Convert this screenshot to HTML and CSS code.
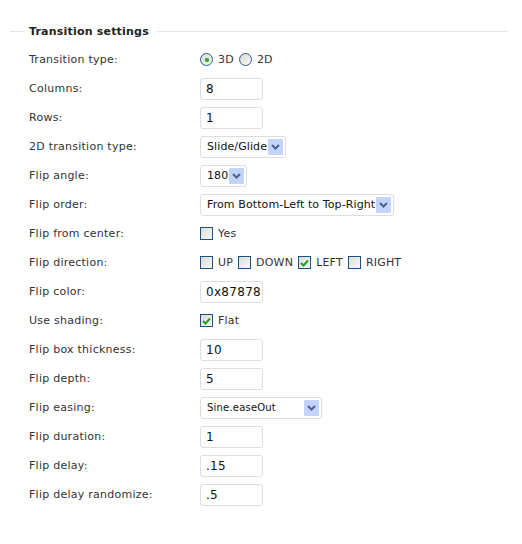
FILE: index.html
```html
<!DOCTYPE html>
<html>
<head>
<meta charset="utf-8">
<link rel="stylesheet" href="styles.css">
</head>
<body>
<div class="fieldset">
  <div class="legend-row">
    <span class="rule short"></span>
    <span class="legend">Transition settings</span>
    <span class="rule long"></span>
  </div>
  <div class="grid">
    <div class="label">Transition type:</div>
    <div class="ctrl">
      <span class="radio on"><span class="dot"></span></span><span class="opt">3D</span>
      <span class="radio"></span><span class="opt">2D</span>
    </div>

    <div class="label">Columns:</div>
    <div class="ctrl"><span class="input">8</span></div>

    <div class="label">Rows:</div>
    <div class="ctrl"><span class="input">1</span></div>

    <div class="label">2D transition type:</div>
    <div class="ctrl"><span class="select"><span class="sel-text">Slide/Glide</span><span class="arrow"><svg width="9" height="6" viewBox="0 0 9 6"><path d="M1 1 L4.5 4.5 L8 1" fill="none" stroke="#4d6185" stroke-width="2"/></svg></span></span></div>

    <div class="label">Flip angle:</div>
    <div class="ctrl"><span class="select"><span class="sel-text">180</span><span class="arrow"><svg width="9" height="6" viewBox="0 0 9 6"><path d="M1 1 L4.5 4.5 L8 1" fill="none" stroke="#4d6185" stroke-width="2"/></svg></span></span></div>

    <div class="label">Flip order:</div>
    <div class="ctrl"><span class="select"><span class="sel-text wide">From Bottom-Left to Top-Right</span><span class="arrow"><svg width="9" height="6" viewBox="0 0 9 6"><path d="M1 1 L4.5 4.5 L8 1" fill="none" stroke="#4d6185" stroke-width="2"/></svg></span></span></div>

    <div class="label">Flip from center:</div>
    <div class="ctrl"><span class="check"></span><span class="opt">Yes</span></div>

    <div class="label">Flip direction:</div>
    <div class="ctrl">
      <span class="check"></span><span class="opt">UP</span>
      <span class="check"></span><span class="opt">DOWN</span>
      <span class="check on"><svg width="9" height="8" viewBox="0 0 9 8"><path d="M1 4 L3.5 6.5 L8 1.5" fill="none" stroke="#21a121" stroke-width="2"/></svg></span><span class="opt">LEFT</span>
      <span class="check"></span><span class="opt">RIGHT</span>
    </div>

    <div class="label">Flip color:</div>
    <div class="ctrl"><span class="input">0x87878</span></div>

    <div class="label">Use shading:</div>
    <div class="ctrl"><span class="check on"><svg width="9" height="8" viewBox="0 0 9 8"><path d="M1 4 L3.5 6.5 L8 1.5" fill="none" stroke="#21a121" stroke-width="2"/></svg></span><span class="opt">Flat</span></div>

    <div class="label">Flip box thickness:</div>
    <div class="ctrl"><span class="input">10</span></div>

    <div class="label">Flip depth:</div>
    <div class="ctrl"><span class="input">5</span></div>

    <div class="label">Flip easing:</div>
    <div class="ctrl"><span class="select easing"><span class="sel-text">Sine.easeOut</span><span class="arrow"><svg width="9" height="6" viewBox="0 0 9 6"><path d="M1 1 L4.5 4.5 L8 1" fill="none" stroke="#4d6185" stroke-width="2"/></svg></span></span></div>

    <div class="label">Flip duration:</div>
    <div class="ctrl"><span class="input">1</span></div>

    <div class="label">Flip delay:</div>
    <div class="ctrl"><span class="input">.15</span></div>

    <div class="label">Flip delay randomize:</div>
    <div class="ctrl"><span class="input">.5</span></div>
  </div>
</div>
</body>
</html>
```

FILE: styles.css
```css
html, body {
  margin: 0;
  padding: 0;
  background: #ffffff;
}
body {
  font-family: "DejaVu Sans", Verdana, sans-serif;
  font-size: 11px;
  color: #333333;
  -webkit-font-smoothing: none;
}
.fieldset {
  padding: 22px 14px 0 10px;
}
.legend-row {
  display: flex;
  align-items: center;
  height: 18px;
}
.rule {
  height: 1px;
  background: #e4e4e4;
}
.rule.short {
  width: 14px;
  margin-right: 5px;
}
.rule.long {
  flex: 1;
  margin-left: 8px;
}
.legend {
  font-weight: bold;
  font-size: 11px;
  letter-spacing: 0.2px;
  color: #222222;
}
.grid {
  display: grid;
  grid-template-columns: 171px auto;
  grid-auto-rows: 29px;
  padding-left: 19px;
  margin-top: 5px;
}
.label, .ctrl {
  display: flex;
  align-items: center;
}
.label {
  letter-spacing: 0.25px;
}
.opt {
  margin: 0 5px 0 5px;
  letter-spacing: 0.2px;
}
.radio {
  width: 11px;
  height: 11px;
  border: 1px solid #2f5a8a;
  border-radius: 50%;
  background: linear-gradient(135deg, #dcdcd6, #f7f7f4);
  display: inline-flex;
  align-items: center;
  justify-content: center;
}
.radio .dot {
  width: 4px;
  height: 4px;
  border-radius: 50%;
  background: #21b121;
  box-shadow: 0 0 1px #5fd35f;
}
.check {
  width: 11px;
  height: 11px;
  border: 1px solid #1c5180;
  background: linear-gradient(135deg, #dcdcd6, #f8f8f6);
  display: inline-flex;
  align-items: center;
  justify-content: center;
}
.input {
  box-sizing: border-box;
  width: 63px;
  height: 22px;
  border: 1px solid #dddddd;
  border-radius: 3px;
  padding: 0 5px;
  display: flex;
  align-items: center;
  color: #111111;
  font-size: 12px;
  letter-spacing: 0.3px;
  overflow: hidden;
  white-space: nowrap;
}
.select {
  box-sizing: border-box;
  height: 22px;
  border: 1px solid #dddddd;
  border-radius: 3px;
  display: inline-flex;
  align-items: center;
  padding: 0 2px 0 6px;
  font-size: 11px;
  letter-spacing: 0.1px;
  color: #111111;
}
.sel-text {
  flex: 1;
  white-space: nowrap;
}
.easing {
  width: 122px;
}
.easing .sel-text {
  font-size: 10px;
  letter-spacing: 0.2px;
}
.arrow {
  width: 15px;
  height: 16px;
  background: #c3d4fc;
  border-radius: 1px;
  display: inline-flex;
  align-items: center;
  justify-content: center;
  margin-left: 1px;
}
```
